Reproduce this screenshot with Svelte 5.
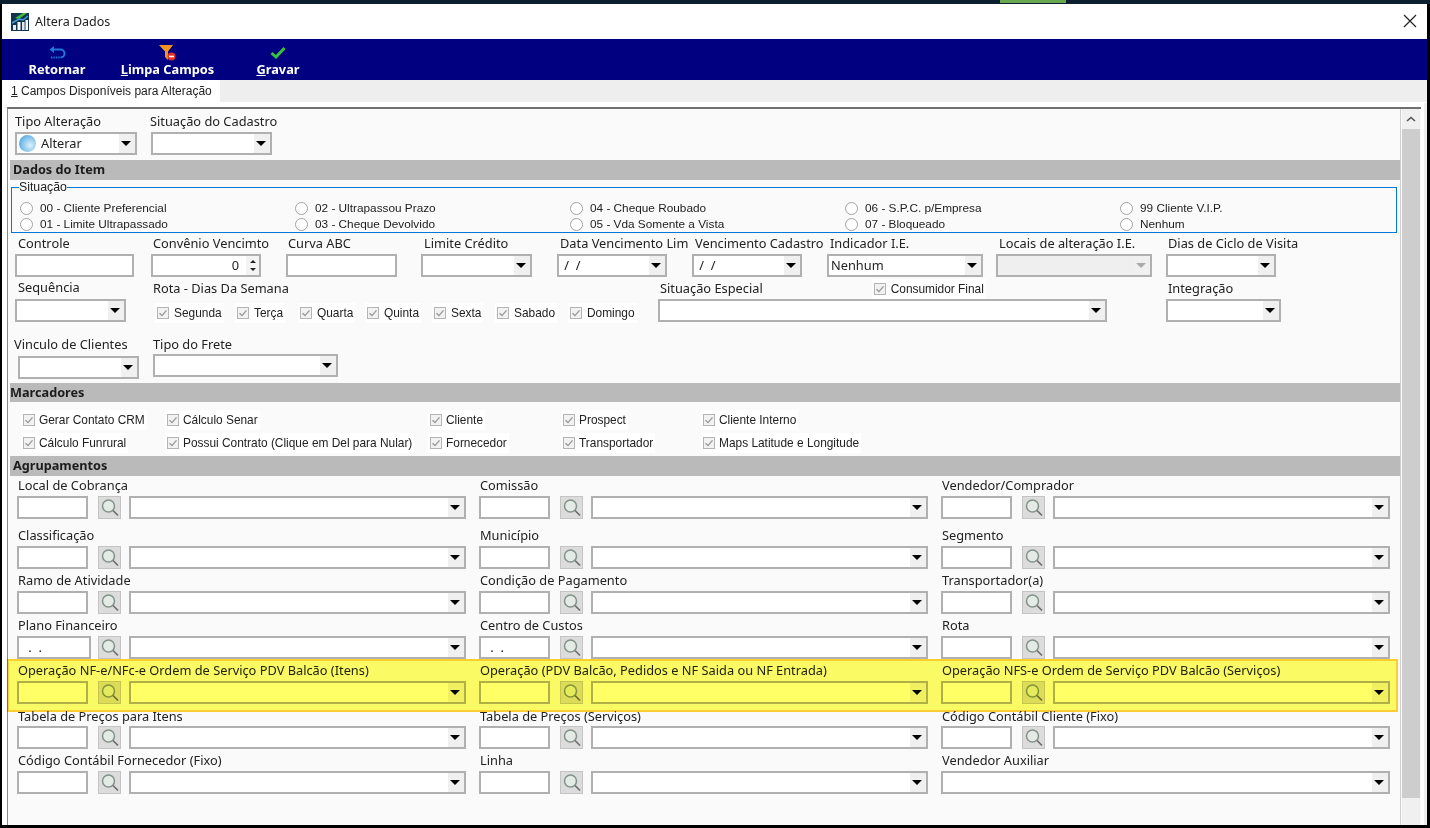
<script>
	// x / w are window coordinates, turned into flow margins by place()
	const CONTENT_X = 8;
	function place(fields) {
		let end = CONTENT_X;
		return fields.map((f) => {
			const out = { ...f, ml: f.x - end };
			end = f.x + f.w;
			return out;
		});
	}

	const rowTop = place([
		{ label: 'Tipo Alteração', lx: 15, x: 15, w: 122, kind: 'combo', text: 'Alterar', ball: true },
		{ label: 'Situação do Cadastro', lx: 150, x: 151, w: 121, kind: 'combo' }
	]);
	const rowControle = place([
		{ label: 'Controle', lx: 18, x: 15, w: 119, kind: 'input' },
		{ label: 'Convênio Vencimto', lx: 153, x: 151, w: 110, kind: 'spin' },
		{ label: 'Curva ABC', lx: 288, x: 286, w: 111, kind: 'input' },
		{ label: 'Limite Crédito', lx: 424, x: 421, w: 111, kind: 'combo' },
		{ label: 'Data Vencimento Lim', lx: 560, x: 557, w: 110, kind: 'combo', text: ' /  /' },
		{ label: 'Vencimento Cadastro', lx: 695, x: 692, w: 110, kind: 'combo', text: ' /  /' },
		{ label: 'Indicador I.E.', lx: 830, x: 827, w: 156, kind: 'combo', text: 'Nenhum' },
		{ label: 'Locais de alteração I.E.', lx: 999, x: 996, w: 156, kind: 'combo', disabled: true },
		{ label: 'Dias de Ciclo de Visita', lx: 1168, x: 1166, w: 110, kind: 'combo' }
	]);
	const rowFrete = place([
		{ label: 'Vinculo de Clientes', lx: 14, x: 18, w: 121, kind: 'combo', gap: 4 },
		{ label: 'Tipo do Frete', lx: 153, x: 153, w: 185, kind: 'combo', gap: 2 }
	]);

	const dias = [
		{ t: 'Segunda', w: 80 },
		{ t: 'Terça', w: 63 },
		{ t: 'Quarta', w: 67 },
		{ t: 'Quinta', w: 67 },
		{ t: 'Sexta', w: 63 },
		{ t: 'Sabado', w: 73 },
		{ t: 'Domingo', w: 70 }
	];

	const radios = [
		'00 - Cliente Preferencial', '01 - Limite Ultrapassado',
		'02 - Ultrapassou Prazo', '03 - Cheque Devolvido',
		'04 - Cheque Roubado', '05 - Vda Somente a Vista',
		'06 - S.P.C. p/Empresa', '07 - Bloqueado',
		'99 Cliente V.I.P.', 'Nenhum'
	];

	const marcadores = [
		['Gerar Contato CRM', 'Cálculo Senar', 'Cliente', 'Prospect', 'Cliente Interno'],
		['Cálculo Funrural', 'Possui Contrato (Clique em Del para Nular)', 'Fornecedor', 'Transportador', 'Maps Latitude e Longitude']
	];
	const marcCols = [144, 263, 133, 140, 200];

	const grupos = [
		{ top: 1, gap: 3, cells: [{ l: 'Local de Cobrança' }, { l: 'Comissão' }, { l: 'Vendedor/Comprador' }] },
		{ top: 8, gap: 3, cells: [{ l: 'Classificação' }, { l: 'Município' }, { l: 'Segmento' }] },
		{ top: 3, gap: 3, cells: [{ l: 'Ramo de Atividade' }, { l: 'Condição de Pagamento' }, { l: 'Transportador(a)' }] },
		{ top: 3, gap: 3, cells: [{ l: 'Plano Financeiro', code: ' .  .', wide: true }, { l: 'Centro de Custos', code: ' .  .' }, { l: 'Rota' }] },
		{ top: 3, gap: 3, cells: [{ l: 'Operação NF-e/NFc-e Ordem de Serviço PDV Balcão (Itens)' }, { l: 'Operação (PDV Balcão, Pedidos e NF Saida ou NF Entrada)' }, { l: 'Operação NFS-e Ordem de Serviço PDV Balcão (Serviços)' }] },
		{ top: 4, gap: 2, cells: [{ l: 'Tabela de Preços para Itens' }, { l: 'Tabela de Preços (Serviços)' }, { l: 'Código Contábil Cliente (Fixo)' }] },
		{ top: 3, gap: 3, cells: [{ l: 'Código Contábil Fornecedor (Fixo)' }, { l: 'Linha' }, { l: 'Vendedor Auxiliar', full: true }] }
	];
</script>

{#snippet check(text)}
	<span class="check">
		<svg class="box" viewBox="0 0 12 12" width="12" height="12" aria-hidden="true">
			<rect x="0.5" y="0.5" width="11" height="11" fill="#f2f2f2" stroke="#b4b4b4" />
			<path d="M2.5 6.2 5 8.6 9.5 3.4" fill="none" stroke="#9a9a9a" stroke-width="1.4" />
		</svg>
		{text}
	</span>
{/snippet}

{#snippet lupa()}
	<div class="lupa">
		<svg viewBox="0 0 20 20" width="20" height="20" aria-hidden="true">
			<circle cx="8.5" cy="8" r="6" fill="#e4ebe6" stroke="#84938a" stroke-width="1.5" />
			<path d="M13 12.5 18 17.5" stroke="#6e6e6e" stroke-width="1.7" />
		</svg>
	</div>
{/snippet}

{#snippet control(f)}
	{#if f.kind === 'combo'}
		<div class="ctl combo" class:disabled={f.disabled}>
			{#if f.ball}<span class="ball"></span>{/if}
			<span class="val">{f.text ?? ''}</span>
			<span class="arrow"></span>
		</div>
	{:else if f.kind === 'spin'}
		<div class="ctl spin">
			<span class="val">0</span>
			<span class="spinbtns"><i class="up"></i><i class="down"></i></span>
		</div>
	{:else}
		<div class="ctl"></div>
	{/if}
{/snippet}

{#snippet field(f)}
	<div class="field" style="margin-left:{f.ml}px;width:{f.w}px">
		<div class="lbl" style="margin-left:{f.lx - f.x}px;margin-bottom:{f.gap ?? 3}px">{f.label}</div>
		{@render control(f)}
	</div>
{/snippet}

<div class="window">
	<div class="desktop"><span class="green"></span></div>
	<header class="titlebar">
		<svg class="logo" viewBox="0 0 18 18" width="18" height="18" aria-hidden="true">
			<rect width="18" height="18" fill="#12344f" />
			<path d="M4 5 12 0h4L8 6z" fill="#3fbf3a" />
			<path d="M1 10 8 6l4 1 5-4" fill="none" stroke="#3f9fd8" stroke-width="1.6" />
			<rect x="2" y="12" width="3" height="5" fill="#e8eef2" />
			<rect x="6.5" y="9" width="3" height="8" fill="#fff" />
			<rect x="11" y="9" width="2.6" height="8" fill="#dfe8ee" />
			<rect x="14.5" y="7" width="2.5" height="10" fill="#fff" />
		</svg>
		<span class="title">Altera Dados</span>
		<svg class="close" viewBox="0 0 14 14" width="14" height="14" aria-hidden="true">
			<path d="M1 1 13 13M13 1 1 13" stroke="#222" stroke-width="1.2" />
		</svg>
	</header>

	<nav class="toolbar">
		<button class="tool retornar">
			<svg viewBox="0 0 18 16" width="18" height="16" aria-hidden="true">
				<path d="M6 1 1.5 4.5 6 8z" fill="#2377d8" />
				<path d="M5 4.5h7.5a4 4 0 0 1 0 8" fill="none" stroke="#2377d8" stroke-width="2" />
				<path d="M3 12.5h9" fill="none" stroke="#2377d8" stroke-width="2" stroke-dasharray="1.4 1" />
			</svg>
			<span>Retornar</span>
		</button>
		<button class="tool limpa">
			<svg viewBox="0 0 18 18" width="18" height="18" aria-hidden="true">
				<path d="M0 1h14L9 7.5V16L6 13V7.5z" fill="#f79420" />
				<circle cx="12.5" cy="12.5" r="4" fill="#e4312b" />
				<rect x="10" y="11.7" width="5" height="1.6" fill="#fff" />
			</svg>
			<span><u>L</u>impa Campos</span>
		</button>
		<button class="tool gravar">
			<svg viewBox="0 0 16 13" width="16" height="13" aria-hidden="true">
				<path d="M1.5 6.5 6 10.5 14.5 1.5" fill="none" stroke="#35c23c" stroke-width="3" />
			</svg>
			<span><u>G</u>ravar</span>
		</button>
	</nav>

	<div class="tabstrip">
		<div class="tab"><u>1</u> Campos Disponíveis para Alteração</div>
	</div>

	<div class="page">
		<div class="panel">
			<div class="content">
				<div class="row first">
					{#each rowTop as f}{@render field(f)}{/each}
				</div>

				<div class="bar dados">Dados do Item</div>

				<fieldset class="situacao">
					<legend>Situação</legend>
					<div class="radios">
						{#each radios as r}
							<label class="radio"><span class="dot"></span>{r}</label>
						{/each}
					</div>
				</fieldset>

				<div class="row controle">
					{#each rowControle as f}{@render field(f)}{/each}
				</div>

				<div class="row sequencia">
					<div class="field" style="margin-left:7px;width:111px">
						<div class="lbl seq" style="margin-left:3px">Sequência</div>
						<div class="ctl combo"><span class="val"></span><span class="arrow"></span></div>
					</div>
					<div class="rota">
						<div class="lbl">Rota - Dias Da Semana</div>
						<div class="dias">
							{#each dias as d}
								<div style="width:{d.w}px">{@render check(d.t)}</div>
							{/each}
						</div>
					</div>
					<div class="especial">
						<div class="lblrow">
							<div class="lbl">Situação Especial</div>
							{@render check('Consumidor Final')}
						</div>
						<div class="ctl combo"><span class="val"></span><span class="arrow"></span></div>
					</div>
					<div class="integracao">
						<div class="lbl">Integração</div>
						<div class="ctl combo"><span class="val"></span><span class="arrow"></span></div>
					</div>
				</div>

				<div class="row frete">
					{#each rowFrete as f}{@render field(f)}{/each}
				</div>

				<div class="bar marc">Marcadores</div>

				<div class="marcadores">
					{#each marcadores as linha}
						<div class="marcrow">
							{#each linha as m, i}
								<div style="width:{marcCols[i]}px">{@render check(m)}</div>
							{/each}
						</div>
					{/each}
				</div>

				<div class="bar">Agrupamentos</div>

				<div class="grupos">
					{#each grupos as g}
						<div class="gruporow" style="margin-top:{g.top}px">
							{#each g.cells as c}
								<div class="cell">
									<div class="lbl gl" style="margin-bottom:{g.gap}px">{c.l}</div>
									{#if c.full}
										<div class="ctl combo"><span class="val"></span><span class="arrow"></span></div>
									{:else}
										<div class="line">
											<div class="ctl code" class:wide={c.wide}>{c.code ?? ''}</div>
											{@render lupa()}
											<div class="ctl combo"><span class="val"></span><span class="arrow"></span></div>
										</div>
									{/if}
								</div>
							{/each}
						</div>
					{/each}
				</div>

				<div class="highlight"></div>
			</div>

			<aside class="scroll">
				<div class="scrollup">
					<svg viewBox="0 0 10 6" width="10" height="6" aria-hidden="true">
						<path d="M1 5 5 1.5 9 5" fill="none" stroke="#555" stroke-width="1.6" />
					</svg>
				</div>
				<div class="thumb"></div>
			</aside>
		</div>
	</div>
</div>

<style>
	:global(body) {
		margin: 0;
		background: #000;
	}
	.window {
		position: relative;
		width: 1430px;
		height: 828px;
		box-sizing: border-box;
		padding: 0 3px 3px 2px;
		background: #000;
		display: flex;
		flex-direction: column;
		overflow: hidden;
		font-family: 'Noto Sans', sans-serif;
		font-size: 12.8px;
		color: #222;
	}
	.desktop {
		height: 4px;
		flex: none;
		margin: 0 -3px 0 -2px;
		background: #0c1f2e;
		padding-left: 1000px;
	}
	.green {
		display: block;
		width: 66px;
		height: 3px;
		background: #6aa84f;
	}
	.titlebar {
		height: 35px;
		flex: none;
		background: #fff;
		display: flex;
		align-items: center;
		padding-left: 9px;
		padding-right: 10px;
	}
	.logo {
		margin-top: 1px;
	}
	.title {
		margin-left: 6px;
		font-size: 12.5px;
		flex: 1;
	}
	.close {
		margin-top: -1px;
	}
	.toolbar {
		height: 41px;
		flex: none;
		background: #000080;
		position: relative;
		display: flex;
	}
	.tool {
		all: unset;
		display: flex;
		flex-direction: column;
		align-items: center;
		color: #fff;
		font-weight: 700;
		font-size: 12.8px;
		line-height: 14px;
		height: 41px;
		white-space: nowrap;
	}
	.tool svg {
		height: 18px;
		margin-top: 5px;
	}
	.retornar {
		margin-left: 26px;
		width: 58px;
	}
	.limpa {
		margin-left: 35px;
		width: 93px;
	}
	.gravar {
		margin-left: 42px;
		width: 44px;
	}
	.tabstrip {
		height: 22px;
		flex: none;
		background: #eeeeee;
		border-bottom: 1px solid #fff;
	}
	.tab {
		width: 218px;
		height: 23px;
		box-sizing: border-box;
		background: #fff;
		padding-left: 9px;
		line-height: 22px;
		white-space: nowrap;
		font-family: 'Liberation Sans', sans-serif;
		font-size: 12px;
	}
	.page {
		flex: 1;
		min-height: 0;
		background: #fff;
		padding: 4px 3px 0 5px;
		display: flex;
		box-shadow: inset -3px 0 0 #eeeeee;
	}
	.panel {
		flex: 1;
		display: flex;
		border-top: 2px solid #707070;
		border-left: 1px solid #8a8a8a;
		margin-right: 3px;
		background: #fafafa;
	}
	.content {
		position: relative;
		width: 1393px;
		flex: none;
		border-right: 1px solid #cfcfcf;
		box-sizing: border-box;
	}
	.row {
		display: flex;
		align-items: flex-start;
	}
	.row.first {
		padding-top: 4px;
	}
	.row.controle {
		padding-top: 2px;
		height: 42px;
	}
	.row.sequencia {
		padding-top: 3px;
		height: 43px;
		margin-bottom: 13px;
	}
	.row.frete {
		margin-bottom: 4px;
	}
	.field {
		flex: none;
	}
	.lbl {
		line-height: 16px;
		white-space: nowrap;
		height: 16px;
	}
	.ctl {
		position: relative;
		height: 23px;
		box-sizing: border-box;
		border: 2px solid #b0b0b0;
		background: #fff;
		display: flex;
		align-items: center;
		line-height: 19px;
	}
	.combo .val {
		flex: 1;
		padding-left: 2px;
		white-space: pre;
	}
	.combo .arrow {
		flex: none;
		align-self: stretch;
		width: 16px;
		background: #f0f0f0;
		position: relative;
	}
	.combo .arrow::after {
		content: '';
		position: absolute;
		left: 2px;
		top: 7px;
		border-style: solid;
		border-width: 5px 5px 0;
		border-color: #000 transparent transparent;
	}
	.combo.disabled {
		background: #efefef;
	}
	.combo.disabled .arrow::after {
		border-top-color: #aaa;
	}
	.ball {
		width: 17px;
		height: 17px;
		margin-left: 2px;
		margin-right: 3px;
		flex: none;
		border-radius: 50%;
		background: radial-gradient(circle at 65% 60%, #dff1fb, #5aaee6 75%);
	}
	.spin {
		justify-content: flex-end;
	}
	.spin .val {
		margin-right: 7px;
	}
	.spinbtns {
		width: 13px;
		align-self: stretch;
		background: #f4f4f4;
		display: flex;
		flex-direction: column;
		align-items: center;
		justify-content: space-evenly;
	}
	.spinbtns i {
		border-style: solid;
		border-color: transparent;
		border-width: 0 3px;
	}
	.spinbtns .up {
		border-bottom: 3px solid #222;
	}
	.spinbtns .down {
		border-top: 3px solid #222;
	}
	.bar {
		height: 20px;
		margin-left: 2px;
		background: #bababa;
		font-weight: 700;
		font-size: 12.7px;
		line-height: 19px;
		padding-left: 3px;
		color: #1c1c1c;
	}
	.bar.dados {
		margin-top: 5px;
	}
	.bar.marc {
		height: 19px;
		line-height: 19px;
		padding-left: 0;
	}
	.situacao {
		margin: 1px 3px 0 3px;
		padding: 0 0 0 8px;
		border: 1px solid #0078d7;
		height: 52px;
		box-sizing: border-box;
		min-width: 0;
	}
	legend {
		padding: 0;
		margin-left: -1px;
		line-height: 12px;
		font-family: 'Liberation Sans', sans-serif;
		font-size: 12.3px;
	}
	.radios {
		display: grid;
		grid-auto-flow: column;
		grid-template-rows: 16px 16px;
		grid-template-columns: repeat(5, 275px);
		padding-top: 7px;
	}
	.radio {
		display: flex;
		align-items: center;
		white-space: nowrap;
		font-family: 'Liberation Sans', sans-serif;
		font-size: 11.8px;
	}
	.dot {
		width: 13px;
		height: 13px;
		box-sizing: border-box;
		border: 1px solid #a3a3a3;
		border-radius: 50%;
		background: #fff;
		margin-right: 7px;
	}
	.check {
		display: inline-flex;
		align-items: center;
		gap: 4px;
		height: 20px;
		padding: 0 2px;
		background: #fff;
		white-space: nowrap;
		font-family: 'Liberation Sans', sans-serif;
		font-size: 11.9px;
	}
	.rota {
		margin-left: 27px;
		width: 505px;
	}
	.dias {
		display: flex;
		margin-top: 7px;
		margin-left: 2px;
	}
	.dias .check {
		gap: 5px;
	}
	.especial {
		width: 449px;
	}
	.lblrow {
		display: flex;
		align-items: center;
		height: 16px;
		margin-bottom: 3px;
		margin-left: 2px;
	}
	.lblrow .check {
		margin-left: 109px;
		gap: 5px;
		margin-top: 2px;
	}
	.integracao {
		margin-left: 59px;
		width: 115px;
	}
	.integracao .lbl {
		margin-left: 2px;
		margin-bottom: 3px;
	}
	.seq {
		margin-bottom: 4px;
		margin-top: -1px;
	}
	.marcadores {
		height: 54px;
		padding-top: 6px;
		box-sizing: border-box;
	}
	.marcrow {
		display: flex;
		padding-left: 13px;
		height: 23px;
		align-items: center;
	}
	.grupos {
		padding-left: 9px;
	}
	.gruporow {
		display: grid;
		grid-template-columns: repeat(3, 462px);
	}
	.cell {
		width: 449px;
	}
	.gl {
		margin-left: 1px;
	}
	.line {
		display: flex;
	}
	.code {
		width: 71px;
		flex: none;
		white-space: pre;
		padding-left: 6px;
		margin-right: 10px;
	}
	.code.wide {
		width: 74px;
		margin-right: 7px;
	}
	.lupa {
		width: 23px;
		height: 23px;
		flex: none;
		box-sizing: border-box;
		background: #dcdcdc;
		border: 1px solid #c4c4c4;
		display: flex;
		align-items: center;
		justify-content: center;
		margin-right: 8px;
	}
	.line .combo {
		flex: 1;
	}
	.highlight {
		position: absolute;
		left: -1px;
		top: 550px;
		width: 1391px;
		height: 53px;
		box-sizing: border-box;
		background: #ffff66;
		border: 2px solid #ffd233;
		mix-blend-mode: multiply;
		pointer-events: none;
	}
	.scroll {
		width: 18px;
		margin-left: 1px;
		background: #f0f0f0;
		display: flex;
		flex-direction: column;
		flex: none;
	}
	.scrollup {
		height: 20px;
		display: flex;
		align-items: center;
		justify-content: center;
	}
	.thumb {
		height: 669px;
		background: #cdcdcd;
	}
</style>
